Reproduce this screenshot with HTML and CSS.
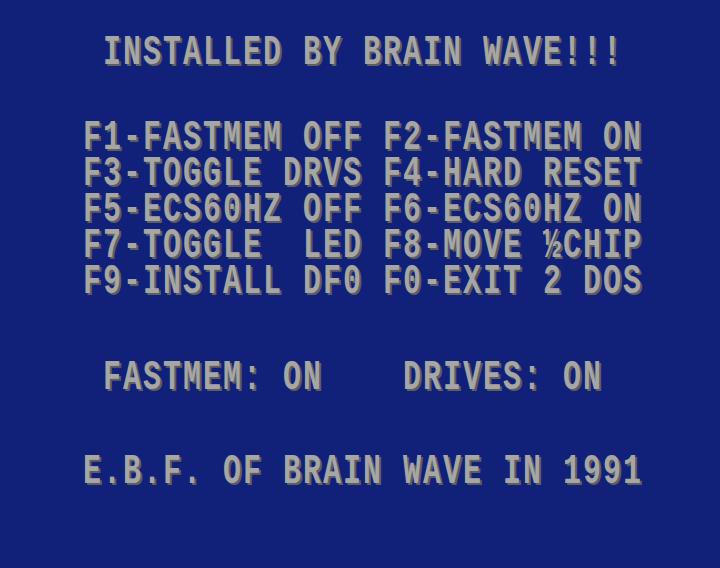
FILE: index.html
```html
<!DOCTYPE html>
<html>
<head>
<meta charset="utf-8">
<link rel="stylesheet" href="styles.css">
</head>
<body>
<div class="screen">
  <div class="text">
    <div class="line title"> INSTALLED BY BRAIN WAVE!!!</div>
    <div class="menu">
      <div class="line">F1-FASTMEM OFF F2-FASTMEM ON</div>
      <div class="line">F3-TOGGLE DRVS F4-HARD RESET</div>
      <div class="line">F5-ECS60HZ OFF F6-ECS60HZ ON</div>
      <div class="line">F7-TOGGLE  LED F8-MOVE ½CHIP</div>
      <div class="line">F9-INSTALL DF0 F0-EXIT 2 DOS</div>
    </div>
    <div class="line status"> FASTMEM: ON    DRIVES: ON</div>
    <div class="line credit">E.B.F. OF BRAIN WAVE IN 1991</div>
  </div>
</div>
</body>
</html>
```
FILE: styles.css
```css
html, body {
  margin: 0;
  padding: 0;
  background: #112078;
}
.screen {
  width: 720px;
  height: 568px;
  background: #112078;
  overflow: hidden;
}
.text {
  transform: scaleY(1.389);
  transform-origin: 0 0;
  padding: 26px 0 0 83px;
  font-family: "Liberation Mono", monospace;
  font-weight: bold;
  font-size: 30px;
  letter-spacing: 2px;
  color: #a6a6a6;
  text-shadow: 2px 1.5px 0 #5e5e5e;
}
.line {
  white-space: pre;
  line-height: 25.92px;
  height: 25.92px;
}
.menu {
  margin-top: 35.28px;
}
.status {
  margin-top: 43.2px;
}
.credit {
  margin-top: 42.48px;
}
```
